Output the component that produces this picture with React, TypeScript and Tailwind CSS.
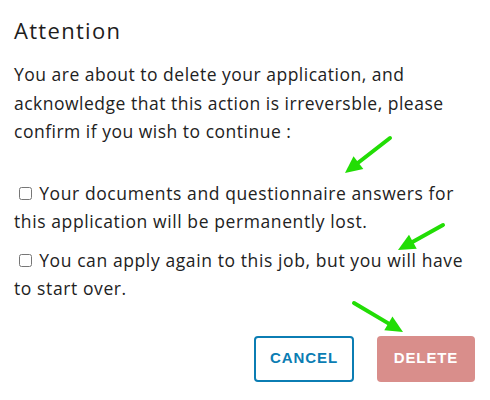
import React from "react";

type Arrow = { x1: number; y1: number; x2: number; y2: number };

// annotation arrows drawn over the dialog
const arrows: Arrow[] = [
  { x1: 390, y1: 138, x2: 345, y2: 173 },
  { x1: 443, y1: 225, x2: 398, y2: 250 },
  { x1: 354, y1: 303, x2: 403, y2: 332 },
];

function ArrowMark({ a }: { a: Arrow }) {
  const dx = a.x2 - a.x1;
  const dy = a.y2 - a.y1;
  const len = Math.sqrt(dx * dx + dy * dy);
  const ux = dx / len;
  const uy = dy / len;
  const head = 17;
  const half = 8;
  const bx = a.x2 - ux * head;
  const by = a.y2 - uy * head;
  const p1 = `${bx - uy * half},${by + ux * half}`;
  const p2 = `${bx + uy * half},${by - ux * half}`;
  return (
    <g>
      <line x1={a.x1} y1={a.y1} x2={bx + ux * 2} y2={by + uy * 2} stroke="#22dd05" strokeWidth={4} strokeLinecap="round" />
      <polygon points={`${a.x2},${a.y2} ${p1} ${p2}`} fill="#22dd05" />
    </g>
  );
}

export default function App() {
  return (
    <div className="relative w-[490px] h-[400px] bg-white overflow-hidden text-[#222]" style={{ fontFamily: "'Open Sans', sans-serif" }}>
      <div className="px-[14px] pt-[15px]">
        <h2 className="text-[22px] leading-[30px] font-normal tracking-[1.3px] text-[#1d1d1d]">Attention</h2>

        <p className="mt-[15px] text-[17.5px] leading-[28.5px] tracking-[0.5px] whitespace-nowrap">
          You are about to delete your application, and
          <br />
          acknowledge that this action is irreversble, please
          <br />
          confirm if you wish to continue :
        </p>

        <div className="mt-[33px] flex flex-col gap-[11px] text-[17.5px] leading-[28px] tracking-[0.6px] whitespace-nowrap">
          <label className="block">
            <input type="checkbox" className="ml-[5px] mr-[2px] mb-[1px] w-[13px] h-[13px] align-baseline" /> Your documents and questionnaire answers for
            <br />
            this application will be permanently lost.
          </label>
          <label className="block">
            <input type="checkbox" className="ml-[5px] mr-[2px] mb-[1px] w-[13px] h-[13px] align-baseline" /> You can apply again to this job, but you will have
            <br />
            to start over.
          </label>
        </div>

        <div className="mt-[34px] flex justify-end gap-[23px] pr-[1px]" style={{ fontFamily: "'Liberation Sans', Arial, sans-serif" }}>
          <button className="w-[100px] h-[46px] rounded-[4px] border-2 border-[#0b7db3] text-[#0b7db3] font-bold text-[15px] tracking-[0.9px] bg-white">
            CANCEL
          </button>
          <button className="w-[98px] h-[46px] rounded-[4px] bg-[#d98e8b] text-white font-bold text-[15px] tracking-[0.9px]">
            DELETE
          </button>
        </div>
      </div>

      <svg className="absolute inset-0 pointer-events-none" width={490} height={400}>
        {arrows.map((a, i) => (
          <ArrowMark key={i} a={a} />
        ))}
      </svg>
    </div>
  );
}
